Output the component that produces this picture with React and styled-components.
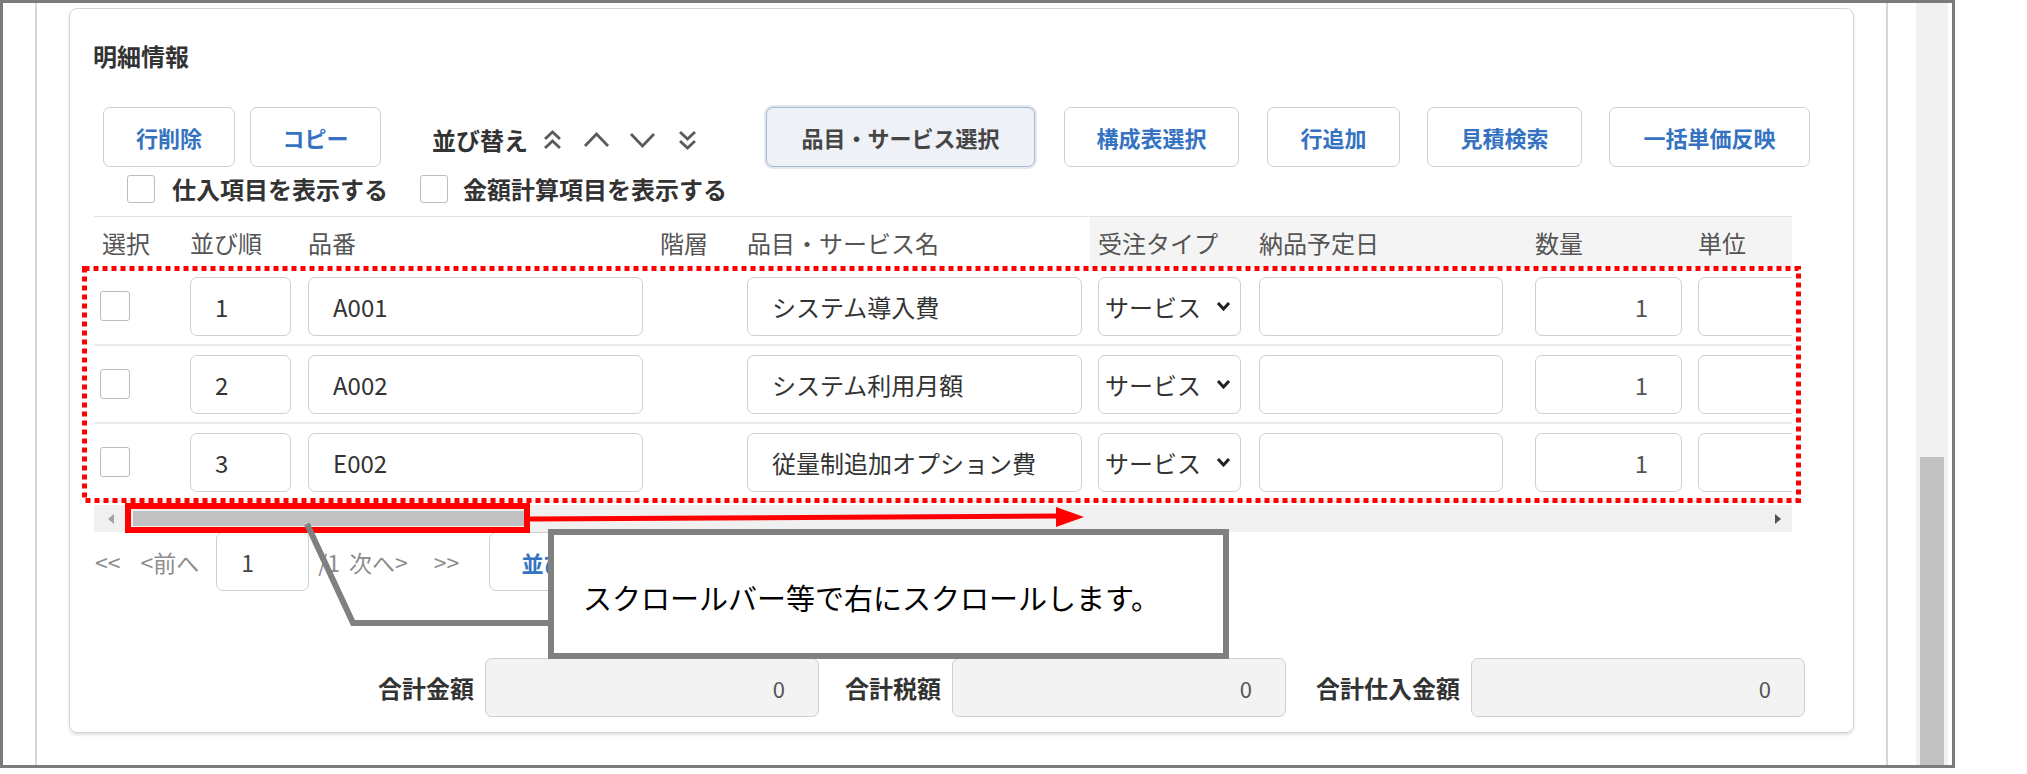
import React from 'react';
import styled, { createGlobalStyle } from 'styled-components';

const FONT = '"Noto Sans CJK JP", "Noto Sans", sans-serif';

const GlobalStyle = createGlobalStyle`
  html, body {
    margin: 0;
    padding: 0;
    background: #fff;
  }
  body {
    font-family: ${FONT};
    color: #333;
  }
  * {
    box-sizing: border-box;
  }
`;

const Page = styled.div`
  position: relative;
  width: 2027px;
  height: 774px;
  overflow: hidden;
`;

const Frame = styled.div`
  width: 1955px;
  height: 768px;
  border: 3px solid #7b7b7b;
  display: flex;
`;

const Gutter = styled.div`
  width: 34px;
  border-right: 2px solid #d6d6d6;
`;

const Main = styled.div`
  width: 1849px;
  padding: 5px 32px 0;
`;

const RightRule = styled.div`
  width: 30px;
  border-left: 2px solid #d6d6d6;
`;

const ScrollTrack = styled.div`
  width: 32px;
  background: #f0f0f0;
  display: flex;
  flex-direction: column;
  justify-content: flex-end;
  padding: 0 4px;
`;

const ScrollThumb = styled.div`
  height: 308px;
  background: #c1c1c1;
`;

const Card = styled.section`
  width: 1785px;
  height: 725px;
  border: 1px solid #d4d4d4;
  border-radius: 8px;
  box-shadow: 0 2px 3px rgba(0, 0, 0, 0.12);
  padding: 29px 44px 15px 24px;
  display: flex;
  flex-direction: column;
`;

const Title = styled.h2`
  margin: 0 0 0 -1px;
  font-size: 24px;
  line-height: 36px;
  font-weight: 700;
  color: #333;
`;

const Toolbar = styled.div`
  margin-top: 33px;
  height: 60px;
  display: flex;
  align-items: center;
  padding-left: 9px;
`;

const Button = styled.button`
  flex: none;
  height: ${p => p.$h || 60}px;
  width: ${p => p.$w}px;
  margin-left: ${p => p.$ml || 0}px;
  padding: 0 0 0 ${p => p.$pl || 0}px;
  text-align: ${p => (p.$pl ? 'left' : 'center')};
  border: 1px solid ${p => (p.$active ? '#a9b8cc' : '#cfcfcf')};
  background: ${p => (p.$active ? '#eef1f6' : '#fff')};
  color: ${p => (p.$active ? '#454545' : '#3573c2')};
  border-radius: 7px;
  box-shadow: ${p => (p.$active ? '0 0 0 2px #e1e8f2' : 'none')};
  font-family: ${FONT};
  font-size: 22px;
  font-weight: 700;
  white-space: nowrap;
  overflow: hidden;
`;

const SortLabel = styled.span`
  flex: none;
  margin-left: ${p => p.$ml}px;
  font-size: 24px;
  font-weight: 700;
  color: #333;
  padding-top: 4px;
  white-space: nowrap;
`;

const SortIcon = styled.svg`
  flex: none;
  margin-left: ${p => p.$ml}px;
  margin-top: 5px;
  stroke: #5b5b5b;
  stroke-width: 2.8;
  fill: none;
`;

const OptionRow = styled.div`
  margin-top: 8px;
  height: 28px;
  display: flex;
  align-items: center;
  padding-left: 33px;
`;

const Check = styled.span`
  flex: none;
  display: inline-block;
  width: ${p => p.$size}px;
  height: ${p => p.$size}px;
  margin-left: ${p => p.$ml || 0}px;
  border: 1px solid #bdbdbd;
  border-radius: 3px;
  background: #fff;
`;

const OptionLabel = styled.span`
  margin-left: ${p => p.$ml}px;
  font-size: 24px;
  font-weight: 700;
  color: #333;
  line-height: 28px;
  white-space: nowrap;
`;

const TableClip = styled.div`
  margin-top: 13px;
  width: 1698px;
  overflow: hidden;
  border-top: 1px solid #e3e3e3;
`;

const Grid = styled.div`
  width: 1796px;
  display: grid;
  grid-template-columns: 88px 118px 352px 87px 351px 161px 276px 163px 200px;
`;

const HeadRow = styled(Grid)`
  height: 51px;
`;

const HeadCell = styled.div`
  display: flex;
  align-items: center;
  padding-left: 8px;
  font-size: 24px;
  color: #555;
  white-space: nowrap;
  background: ${p => (p.$shaded ? '#f4f4f4' : '#fff')};
`;

const BodyRow = styled(Grid)`
  height: 78px;
  align-items: center;
  border-bottom: 2px solid #ebebeb;
`;

const Cell = styled.div`
  padding-left: ${p => (p.$pl !== undefined ? p.$pl : 8)}px;
  display: flex;
  align-items: center;
`;

const Field = styled.div`
  width: ${p => p.$w}px;
  height: 59px;
  flex: none;
  display: flex;
  align-items: center;
  justify-content: ${p => (p.$right ? 'flex-end' : 'flex-start')};
  padding: ${p => (p.$right ? '0 33px 0 0' : '0 0 0 24px')};
  border: 1px solid #cfcfcf;
  border-radius: 7px;
  background: ${p => (p.$muted ? '#f3f3f3' : '#fff')};
  font-size: ${p => (p.$small ? 22 : 24)}px;
  color: ${p => (p.$soft ? '#555' : '#333')};
  white-space: nowrap;
`;

const Select = styled.div`
  width: 143px;
  height: 59px;
  display: flex;
  align-items: center;
  justify-content: space-between;
  padding: 0 9px 0 6px;
  border: 1px solid #cfcfcf;
  border-radius: 7px;
  background: #fff;
  font-size: 24px;
  color: #333;
`;

const HScroll = styled.div`
  margin-top: 3px;
  width: 1698px;
  height: 27px;
  background: #f0f0f0;
  display: flex;
  align-items: center;
  padding: 0 11px 0 14px;
`;

const Arrow = styled.span`
  width: 0;
  height: 0;
  border-top: 5px solid transparent;
  border-bottom: 5px solid transparent;
  ${p =>
    p.$right
      ? 'border-left: 6px solid #505050; margin-left: auto;'
      : 'border-right: 6px solid #a3a3a3;'}
`;

const HThumb = styled.div`
  margin-left: 19px;
  width: 391px;
  height: 15px;
  background: #c1c1c1;
`;

const Pager = styled.div`
  height: 59px;
  display: flex;
  align-items: center;
  font-size: 23px;
  color: #8c8c8c;
  white-space: nowrap;
`;

const PageLink = styled.span`
  flex: none;
  margin-left: ${p => p.$ml || 0}px;
`;

const PageInput = styled(Field)`
  margin-left: ${p => p.$ml}px;
  font-size: 23px;
  color: #444;
`;

const Totals = styled.div`
  margin-top: 67px;
  height: 59px;
  display: flex;
  align-items: center;
  justify-content: flex-end;
  padding-right: 4px;
`;

const TotalLabel = styled.span`
  margin-left: ${p => p.$ml || 0}px;
  margin-right: 11px;
  font-size: 24px;
  font-weight: 700;
  color: #333;
  white-space: nowrap;
`;

const Overlay = styled.svg`
  position: absolute;
  left: 0;
  top: 0;
  pointer-events: none;
`;

const Callout = styled.div`
  position: absolute;
  left: 548px;
  top: 529px;
  width: 681px;
  height: 130px;
  border: 6px solid #808080;
  background: #fff;
  display: flex;
  align-items: center;
  padding: 6px 0 0 29px;
  font-size: 29px;
  color: #000;
  white-space: nowrap;
`;

const DoubleChevron = ({ up, ml }) => (
  <SortIcon $ml={ml} width="19" height="22" viewBox="0 0 19 22">
    {up ? (
      <>
        <polyline points="2,10 9.5,3 17,10" />
        <polyline points="2,19 9.5,12 17,19" />
      </>
    ) : (
      <>
        <polyline points="2,3 9.5,10 17,3" />
        <polyline points="2,12 9.5,19 17,12" />
      </>
    )}
  </SortIcon>
);

const Chevron = ({ up, ml }) => (
  <SortIcon $ml={ml} width="27" height="16" viewBox="0 0 27 16">
    <polyline points={up ? '2,14 13.5,2 25,14' : '2,2 13.5,14 25,2'} />
  </SortIcon>
);

const SelectCaret = () => (
  <svg width="15" height="10" viewBox="0 0 15 10">
    <polyline points="2,2 7.5,8 13,2" fill="none" stroke="#222" strokeWidth="3" />
  </svg>
);

const headers = ['選択', '並び順', '品番', '階層', '品目・サービス名', '受注タイプ', '納品予定日', '数量', '単位'];

const rows = [
  { no: '1', code: 'A001', name: 'システム導入費' },
  { no: '2', code: 'A002', name: 'システム利用月額' },
  { no: '3', code: 'E002', name: '従量制追加オプション費' },
];

const totals = [
  { label: '合計金額', ml: 0 },
  { label: '合計税額', ml: 26 },
  { label: '合計仕入金額', ml: 30 },
];

export default function App() {
  return (
    <Page>
      <GlobalStyle />
      <Frame>
        <Gutter />
        <Main>
          <Card>
            <Title>明細情報</Title>

            <Toolbar>
              <Button $w={132}>行削除</Button>
              <Button $w={131} $ml={15}>コピー</Button>
              <SortLabel $ml={51}>並び替え</SortLabel>
              <DoubleChevron up ml={15} />
              <Chevron up ml={21} />
              <Chevron ml={19} />
              <DoubleChevron ml={22} />
              <Button $w={269} $ml={69} $active>品目・サービス選択</Button>
              <Button $w={175} $ml={29}>構成表選択</Button>
              <Button $w={133} $ml={28}>行追加</Button>
              <Button $w={155} $ml={27}>見積検索</Button>
              <Button $w={201} $ml={27}>一括単価反映</Button>
            </Toolbar>

            <OptionRow>
              <Check $size={28} />
              <OptionLabel $ml={17}>仕入項目を表示する</OptionLabel>
              <Check $size={28} $ml={32} />
              <OptionLabel $ml={15}>金額計算項目を表示する</OptionLabel>
            </OptionRow>

            <TableClip>
              <HeadRow>
                {headers.map((h, i) => (
                  <HeadCell key={h} $shaded={i >= 5}>{h}</HeadCell>
                ))}
              </HeadRow>
              {rows.map(r => (
                <BodyRow key={r.no}>
                  <Cell $pl={6}><Check $size={30} /></Cell>
                  <Cell><Field $w={101}>{r.no}</Field></Cell>
                  <Cell><Field $w={335}>{r.code}</Field></Cell>
                  <Cell />
                  <Cell><Field $w={335}>{r.name}</Field></Cell>
                  <Cell>
                    <Select>
                      <span>サービス</span>
                      <SelectCaret />
                    </Select>
                  </Cell>
                  <Cell><Field $w={244} /></Cell>
                  <Cell><Field $w={147} $right $soft>1</Field></Cell>
                  <Cell><Field $w={150} /></Cell>
                </BodyRow>
              ))}
            </TableClip>

            <HScroll>
              <Arrow />
              <HThumb />
              <Arrow $right />
            </HScroll>

            <Pager>
              <PageLink $ml={1}>&lt;&lt;</PageLink>
              <PageLink $ml={20}>&lt;前へ</PageLink>
              <PageInput $w={93} $ml={17}>1</PageInput>
              <PageLink $ml={9}>/1</PageLink>
              <PageLink $ml={9}>次へ&gt;</PageLink>
              <PageLink $ml={26}>&gt;&gt;</PageLink>
              <Button $w={200} $h={59} $ml={30} $pl={31}>並び順保存</Button>
            </Pager>

            <Totals>
              {totals.map(t => (
                <React.Fragment key={t.label}>
                  <TotalLabel $ml={t.ml}>{t.label}</TotalLabel>
                  <Field $w={334} $right $muted $small $soft>0</Field>
                </React.Fragment>
              ))}
            </Totals>
          </Card>
        </Main>
        <RightRule />
        <ScrollTrack>
          <ScrollThumb />
        </ScrollTrack>
      </Frame>

      <Overlay width="2027" height="774" viewBox="0 0 2027 774">
        <rect x="84.5" y="268.5" width="1714" height="232" fill="none" stroke="#ff0000" strokeWidth="5" strokeDasharray="5 4" />
        <rect x="128" y="506" width="399" height="24" fill="none" stroke="#ff0000" strokeWidth="6" />
        <line x1="530" y1="519" x2="1060" y2="516" stroke="#ff0000" strokeWidth="5" />
        <polygon points="1056,507 1084,517 1056,527" fill="#ff0000" />
        <polyline points="307,524 353,623 550,623" fill="none" stroke="#808080" strokeWidth="6" />
      </Overlay>
      <Callout>スクロールバー等で右にスクロールします。</Callout>
    </Page>
  );
}
